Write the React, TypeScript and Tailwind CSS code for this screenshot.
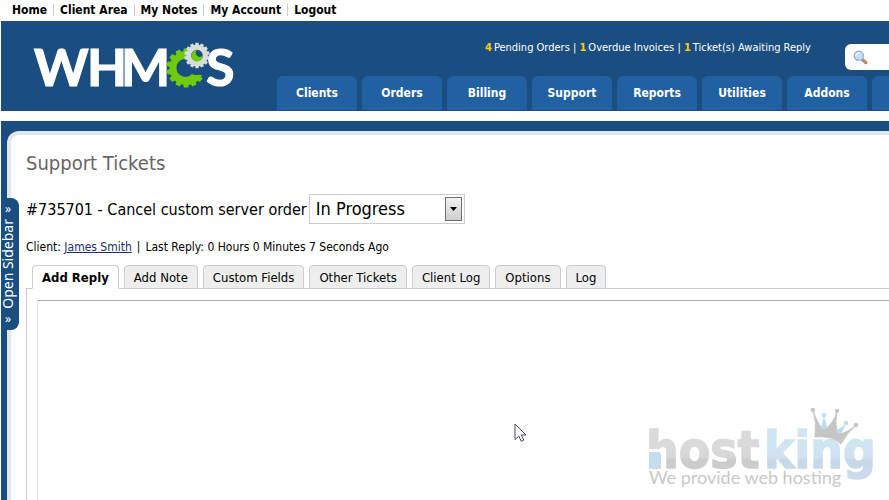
import React from 'react';
import { clsx } from 'clsx';

const topLinks = ['Home', 'Client Area', 'My Notes', 'My Account', 'Logout'];
const menuItems = ['Clients', 'Orders', 'Billing', 'Support', 'Reports', 'Utilities', 'Addons', 'Help'];
const ticketTabs = ['Add Reply', 'Add Note', 'Custom Fields', 'Other Tickets', 'Client Log', 'Options', 'Log'];

const stats = [
  { count: 4, label: 'Pending Orders' },
  { count: 1, label: 'Overdue Invoices' },
  { count: 1, label: 'Ticket(s) Awaiting Reply' },
];

// Square teeth around a ring
const Gear: React.FC<{ cx: number; cy: number; r: number; tooth: number; teeth: number; skip?: number[]; color: string }> = ({
  cx,
  cy,
  r,
  tooth,
  teeth,
  skip = [],
  color,
}) => (
  <g fill={color}>
    {Array.from({ length: teeth }, (_, i) =>
      skip.includes(i) ? null : (
        <path
          key={i}
          d={`M${cx - tooth * 0.62} ${cy - r + 1} L${cx - tooth * 0.45} ${cy - r - tooth * 0.8} H${cx + tooth * 0.45} L${cx + tooth * 0.62} ${cy - r + 1} Z`}
          transform={`rotate(${(360 / teeth) * i} ${cx} ${cy})`}
        />
      )
    )}
  </g>
);

const WhmcsLogo: React.FC = () => (
  <svg width="210" height="80" viewBox="0 -15 210 80" role="img" aria-label="WHMCS">
    <g fill="#ffffff" stroke="#ffffff" strokeWidth="1.2" fontFamily="Lato, sans-serif" fontWeight="700">
      <text x="1" y="45" fontSize="52">W</text>
      <text x="54" y="45" fontSize="52">H</text>
      <text x="88" y="45" fontSize="52">M</text>
      <text x="173" y="45" fontSize="52">S</text>
    </g>
    <circle cx="152" cy="27" r="18" fill="#1a4d80" />
    <Gear cx={153} cy={27} r={15.5} tooth={5} teeth={14} skip={[1, 2, 3, 4]} color="#70cb0b" />
    <path d="M157 10.5 A17 17 0 1 0 169 34 H161 L159 33 A9 9 0 1 1 154 18 Z" fill="#70cb0b" />
    <circle cx="164" cy="14.5" r="11" fill="#1a4d80" />
    <Gear cx={164} cy={14.5} r={10} tooth={3.4} teeth={14} color="#d9dbdd" />
    <circle cx="164" cy="14.5" r="8.3" fill="none" stroke="#d9dbdd" strokeWidth="5" />
    <path d="M164 9 A5.8 5.8 0 1 0 169.8 14.5 A3.8 3.8 0 0 1 164 9 Z" fill="#70cb0b" />
  </svg>
);

const SearchIcon: React.FC = () => (
  <svg width="15" height="15" viewBox="0 0 15 15" aria-hidden="true">
    <path d="M9.5 9.5 L12.8 12.6" stroke="#b0703a" strokeWidth="3" strokeLinecap="round" />
    <path d="M10 9.6 L12.6 12" stroke="#e8b878" strokeWidth="1" strokeLinecap="round" />
    <circle cx="5.8" cy="5.8" r="4.6" fill="#c5e0f8" stroke="#8fb0dc" strokeWidth="1.3" />
    <path d="M3 5.6 A3 3 0 0 1 6 3" fill="none" stroke="#ffffff" strokeWidth="1.2" />
  </svg>
);

const HostKingLogo: React.FC = () => (
  <svg width="232" height="90" viewBox="0 0 232 90" className="overflow-visible" role="img" aria-label="hostking, We provide web hosting">
    <defs>
      <linearGradient id="grey" x1="0" y1="0" x2="0" y2="1">
        <stop offset="0.45" stopColor="#dadada" />
        <stop offset="0.62" stopColor="#d6d6d6" />
        <stop offset="0.66" stopColor="#cbcbcb" />
        <stop offset="1" stopColor="#cfcfcf" />
      </linearGradient>
      <linearGradient id="blue" x1="0" y1="0" x2="0" y2="1">
        <stop offset="0.4" stopColor="#cfe6f2" />
        <stop offset="0.62" stopColor="#d0e1ef" />
        <stop offset="0.66" stopColor="#c5d8e9" />
        <stop offset="1" stopColor="#cddbea" />
      </linearGradient>
    </defs>
    <g fontFamily="'DejaVu Sans Condensed', 'DejaVu Sans', sans-serif" fontWeight="700" fontSize="51" strokeWidth="1.4">
      <text x="-3" y="60" fill="url(#grey)" stroke="url(#grey)">host</text>
      <text x="115" y="60" fill="url(#blue)" stroke="url(#blue)">king</text>
    </g>
    <rect x="-1" y="41" width="13" height="21" fill="#ffffff" />
    <path d="M0 44 H9 Q12 44 12 47 V61 H0 Z" fill="#c5dced" />
    <text x="0" y="76" fontFamily="Lato, sans-serif" fontWeight="400" fontSize="18" fill="#c8c8c8">We provide web hosting</text>
    <path
      d="M166 29 Q168 15 164 3 Q170 19 175 22 Q184 16 188 4 Q185 19 190 26 Q198 25 207 17 Q197 26 192 36 Q184 27 166 29 Z"
      fill="#c6c6c6"
      stroke="#c6c6c6"
      strokeWidth="1"
    />
    <g fill="#c6c6c6">
      <circle cx="164" cy="2" r="2.3" />
      <circle cx="188" cy="3" r="2.3" />
      <circle cx="207" cy="17" r="2.3" />
    </g>
    <g fill="#bcdcf0">
      <circle cx="175" cy="7" r="2.2" />
      <circle cx="197" cy="15" r="2.2" />
      <path d="M175 8 L178 19 L175 22 L172 20 Z M197 16 L193 24 L190 26 L187 23 Z" />
    </g>
  </svg>
);

const MousePointer: React.FC = () => (
  <svg width="14" height="20" viewBox="0 0 14 20" aria-hidden="true">
    <path d="M1 1 V16.5 L4.8 13 L7.2 18.3 L9.8 17.2 L7.4 12 H12 Z" fill="#ffffff" stroke="#4a4a5c" strokeWidth="1" />
  </svg>
);

export default function App() {
  const [activeTab, setActiveTab] = React.useState('Add Reply');
  const [reply, setReply] = React.useState('');

  return (
    <div className="relative flex h-screen min-h-[400px] flex-col overflow-hidden bg-white pl-px font-['DejaVu_Sans_Condensed','DejaVu_Sans',sans-serif] text-xs text-black">
      <nav className="flex h-5 shrink-0 items-center pl-[11px] text-xs leading-4 font-bold">
        {topLinks.map((link, i) => (
          <React.Fragment key={link}>
            {i > 0 && <span className="mx-1.5 h-3 w-px bg-[#cccccc]" />}
            <a href="#">{link}</a>
          </React.Fragment>
        ))}
      </nav>

      <header className="mt-px flex h-[90px] shrink-0 bg-[#1a4d80] text-white">
        <div className="w-[276px] shrink-0 pt-[5px] pl-8">
          <WhmcsLogo />
        </div>
        <div className="flex min-w-0 flex-1 flex-col justify-between overflow-hidden">
          <div className="flex shrink-0 items-start pt-[23px] pl-52">
            <p className="w-[360px] shrink-0 text-[11px] leading-2 whitespace-nowrap">
              {stats.map((stat, i) => (
                <React.Fragment key={stat.label}>
                  {i > 0 && ' | '}
                  <a href="#">
                    <b className="mr-0.5 text-[#ffcc00]">{stat.count}</b>
                    {stat.label}
                  </a>
                </React.Fragment>
              ))}
            </p>
            <label className="flex h-[26px] w-52 shrink-0 items-center rounded-md bg-white pl-2">
              <SearchIcon />
              <input type="text" aria-label="Search" className="ml-2 w-40 text-black outline-none" />
            </label>
          </div>
          <nav className="flex gap-[5px] pb-px">
            {menuItems.map((item) => (
              <a
                key={item}
                href="#"
                className="w-20 shrink-0 rounded-t-md bg-[#2161a1] text-center text-xs leading-[34px] font-bold"
              >
                {item}
              </a>
            ))}
          </nav>
        </div>
      </header>

      <div className="mt-2.5 flex min-h-0 flex-1 flex-col bg-[#1a4d80] pt-2.5 pl-1.5">
        <main className="flex min-h-0 flex-1 flex-col rounded-tl-xl border-t-4 border-l-4 border-[#e0e6ea] bg-white pt-4 pl-[15px]">
          <h1 className="text-xl leading-6 text-[#666666]">Support Tickets</h1>

          <div className="mt-[19px] flex items-center text-base">
            <label htmlFor="status" className="pt-0.5">
              #735701 - Cancel custom server order
            </label>
            <div className="relative ml-0.5">
              <select
                id="status"
                defaultValue="In Progress"
                className="h-[30px] w-[156px] appearance-none border border-[#cccccc] bg-white pl-1.5 text-lg leading-6"
              >
                <option>Open</option>
                <option>Answered</option>
                <option>In Progress</option>
                <option>Closed</option>
              </select>
              <span className="pointer-events-none absolute top-[3px] right-[3px] flex h-6 w-[17px] items-center justify-center border border-[#707070] bg-linear-to-b from-[#f2f2f2] to-[#cfcfcf]">
                <svg width="7" height="4" viewBox="0 0 7 4">
                  <path d="M0 0 H7 L3.5 4 Z" fill="#000000" />
                </svg>
              </span>
            </div>
          </div>

          <p className="mt-[15px] leading-4">
            Client:{' '}
            <a href="#" className="text-[#1a2f6b] underline">
              James Smith
            </a>
            <span className="mx-[5px]">|</span>
            Last Reply: 0 Hours 0 Minutes 7 Seconds Ago
          </p>

          <div role="tablist" className="relative z-10 mt-2.5 -mb-px flex gap-[5px] pl-1.5">
            {ticketTabs.map((tab) => (
              <button
                key={tab}
                role="tab"
                aria-selected={tab === activeTab}
                onClick={() => setActiveTab(tab)}
                className={clsx(
                  'h-6 rounded-t-[4px] border border-[#cccccc] px-[9px] text-[13px] leading-6',
                  tab === activeTab ? 'border-b-white bg-white font-bold' : 'bg-[#eeeeee]'
                )}
              >
                {tab}
              </button>
            ))}
          </div>

          <section className="flex min-h-0 flex-1 flex-col border-t border-l border-[#cccccc] pt-[11px] pl-[10px]">
            <textarea
              aria-label="Reply"
              value={reply}
              onChange={(e) => setReply(e.target.value)}
              className="w-full flex-1 resize-none border-t border-l border-t-[#abadb3] border-l-[#e2e3ea] bg-white p-1 text-sm outline-none"
            />
          </section>
        </main>
      </div>

      {/* Sidebar handle */}
      <button className="absolute top-[198px] left-px flex h-[132px] w-[18px] flex-col items-center justify-center gap-0.5 rounded-r-lg bg-[#1a4d80] pr-1 font-['Noto_Sans',sans-serif] text-white">
        <span className="text-xs leading-4">»</span>
        <span className="rotate-180 text-sm leading-[18px] whitespace-nowrap [writing-mode:vertical-rl]">Open Sidebar</span>
        <span className="text-xs leading-4">»</span>
      </button>

      <div className="pointer-events-none absolute top-[423px] left-[514px]">
        <MousePointer />
      </div>
      <div className="pointer-events-none absolute right-2 bottom-0.5">
        <HostKingLogo />
      </div>
    </div>
  );
}
